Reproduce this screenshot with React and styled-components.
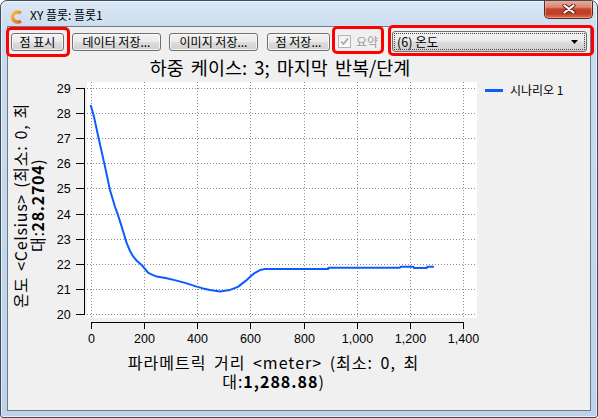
import React from 'react';
import styled, { createGlobalStyle } from 'styled-components';

const KR = `"Noto Sans CJK KR", "Noto Sans", sans-serif`;
const NUM = `"Liberation Sans", Arial, sans-serif`;

const GlobalStyle = createGlobalStyle`
  html, body { margin: 0; padding: 0; background: #ffffff; }
  body { font-family: ${KR}; }
  #root { width: 598px; height: 418px; }
`;

const Window = styled.div`
  position: relative;
  box-sizing: border-box;
  width: 598px;
  height: 418px;
  border: 1px solid #3f4c5c;
  border-radius: 7px 7px 3px 3px;
  background: linear-gradient(to bottom, #dae7f5 0px, #cadcef 30px, #bed3ea 100%);
  box-shadow: inset 0 0 0 1px rgba(255, 255, 255, 0.55);
  display: flex;
  flex-direction: column;
  padding-bottom: 6px;
  overflow: hidden;
`;

const TitleBar = styled.div`
  height: 25px;
  flex: none;
  display: flex;
  align-items: flex-start;
  padding-left: 9px;
`;

const AppIcon = styled.svg`
  margin-top: 9px;
  flex: none;
`;

const Caption = styled.span`
  margin-left: 7px;
  margin-top: 6px;
  font: 12px/16px ${KR};
  color: #000;
  white-space: nowrap;
`;

const CloseButton = styled.div`
  margin-left: auto;
  margin-right: 4px;
  margin-top: -1px;
  width: 49px;
  height: 19px;
  box-sizing: border-box;
  border: 1px solid #5e2418;
  border-top: none;
  border-radius: 0 0 5px 5px;
  background: linear-gradient(to bottom, #eab0a2 0%, #dc8570 40%, #c4452e 50%, #c13c24 75%, #d9714f 100%);
  box-shadow: inset 0 0 0 1px rgba(255, 210, 190, 0.45);
  display: flex;
  align-items: center;
  justify-content: center;
`;

const ContentFrame = styled.div`
  flex: 1;
  margin: 0 6px;
  border: 1px solid #6c7b8b;
  background: #f0f0f0;
  display: flex;
  flex-direction: column;
  min-height: 0;
`;

const Toolbar = styled.div`
  height: 29px;
  flex: none;
  display: flex;
  align-items: center;
  gap: 8px;
  padding: 0 3px;
`;

const Button = styled.button`
  box-sizing: border-box;
  width: ${p => p.$w}px;
  margin-left: ${p => p.$ml || 0}px;
  height: 18px;
  padding: 0;
  border: 1px solid #707070;
  border-radius: 3px;
  background: linear-gradient(to bottom, #f2f2f2 0%, #ebebeb 48%, #dddddd 52%, #cfcfcf 100%);
  box-shadow: inset 0 0 0 1px rgba(255, 255, 255, 0.7);
  font: 12px/16px ${KR};
  color: #000;
  white-space: nowrap;
  flex: none;
`;

const CheckLabel = styled.label`
  display: flex;
  align-items: center;
  gap: 5px;
  font: 12px/16px ${KR};
  color: #9c9c9c;
  flex: none;
`;

const CheckBox = styled.span`
  box-sizing: border-box;
  width: 13px;
  height: 13px;
  border: 1px solid #b4b4b4;
  background: linear-gradient(to bottom, #f0f0f0, #fbfbfb);
  display: flex;
  align-items: center;
  justify-content: center;
`;

const Combo = styled.div`
  box-sizing: border-box;
  flex: none;
  width: 195px;
  height: 21px;
  margin-left: auto;
  border: 1px solid #707070;
  border-radius: 3px;
  background: linear-gradient(to bottom, #f2f2f2 0%, #ebebeb 48%, #dddddd 52%, #cfcfcf 100%);
  padding: 1px;
  display: flex;
`;

const ComboFocus = styled.div`
  flex: 1;
  border: 1px dotted #444;
  display: flex;
  align-items: center;
  justify-content: space-between;
  padding: 0 6px 0 2px;
  font: 12.5px/16px ${KR};
  color: #000;
`;

const ChartArea = styled.div`
  flex: 1;
  display: grid;
  grid-template-columns: 44px 432px 1fr;
  grid-template-rows: 23px 271px auto;
`;

const ChartTitle = styled.div`
  grid-column: 2;
  grid-row: 1;
  text-align: center;
  padding-left: 24px;
  font: 18.5px/23px ${KR};
  word-spacing: 3px;
  color: #000;
  white-space: nowrap;
`;

const YTitleCell = styled.div`
  grid-column: 1;
  grid-row: 2;
  display: flex;
  align-items: center;
  justify-content: flex-start;
  padding-left: 4px;
  padding-bottom: 19px;
`;

const YTitleText = styled.div`
  writing-mode: vertical-rl;
  text-orientation: sideways;
  transform: rotate(180deg);
  text-align: center;
  white-space: nowrap;
  font: 16px/17px ${KR};
  letter-spacing: 0.7px;
  word-spacing: 2px;
  color: #000;
`;

const Plot = styled.svg`
  grid-column: 2;
  grid-row: 2;
  display: block;
`;

const Legend = styled.div`
  grid-column: 3;
  grid-row: 2;
  align-self: start;
  margin-top: 3px;
  padding-left: 1px;
  display: flex;
  align-items: center;
  gap: 7px;
`;

const LegendSwatch = styled.span`
  width: 18px;
  height: 3px;
  background: #0a5cff;
`;

const LegendText = styled.span`
  font: 12px/16px ${KR};
  color: #000;
  white-space: nowrap;
`;

const XTitle = styled.div`
  grid-column: 2;
  grid-row: 3;
  margin-top: 3px;
  text-align: center;
  padding-left: 11px;
  font: 16px/19px ${KR};
  letter-spacing: 1px;
  word-spacing: 3px;
  color: #000;
  white-space: nowrap;
`;

const Annotation = styled.div`
  position: absolute;
  box-sizing: border-box;
  left: ${p => p.$x - 1}px;
  top: ${p => p.$y - 1}px;
  width: ${p => p.$w}px;
  height: ${p => p.$h}px;
  border: 3px solid #ff0000;
  border-radius: 5px;
  pointer-events: none;
`;

const data = [
  [0, 28.32], [12.4, 27.85], [28.5, 27.06], [40.6, 26.49], [53.7, 25.87], [72.5, 24.94],
  [91.3, 24.27], [102.5, 23.94], [116.4, 23.48], [135.2, 22.82], [147.6, 22.51], [160, 22.28],
  [173.9, 22.11], [191.5, 21.95], [216.3, 21.64], [230.2, 21.57], [247.9, 21.49], [285.4, 21.42],
  [323, 21.33], [360.6, 21.22], [398.1, 21.09], [421.8, 21.02], [448.1, 20.96], [485.6, 20.9],
  [523.2, 20.96], [538.2, 21.02], [554.4, 21.09], [568.3, 21.21], [585.9, 21.35], [602.1, 21.51],
  [617.1, 21.64], [635.9, 21.75], [654.7, 21.79], [892.4, 21.79], [892.4, 21.84], [1161.7, 21.84],
  [1164.3, 21.88], [1211.6, 21.88], [1214.3, 21.83], [1262, 21.83], [1264.2, 21.88], [1288.88, 21.88],
];

const sx = m => 38.7 + m * 0.26625;
const sy = c => 9 + (29 - c) * 25.111;

const yTicks = [29, 28, 27, 26, 25, 24, 23, 22, 21, 20];
const xTicks = [0, 200, 400, 600, 800, 1000, 1200, 1400];

function Chart() {
  const pts = data.map(([m, c]) => `${sx(m).toFixed(1)},${sy(c).toFixed(1)}`).join(' ');
  return (
    <Plot width="432" height="271" viewBox="0 0 432 271">
      <rect x="35" y="3" width="390" height="236" fill="#ffffff" />
      {yTicks.map(v => {
        const y = Math.round(sy(v)) + 0.5;
        return (
          <line key={'hg' + v} x1="35" x2="425" y1={y} y2={y} stroke="#8a8a8a" strokeDasharray="1 2" shapeRendering="crispEdges" />
        );
      })}
      {xTicks.map(v => {
        const x = Math.round(sx(v)) + 0.5;
        return (
          <line key={'vg' + v} x1={x} x2={x} y1="3" y2="239" stroke="#8a8a8a" strokeDasharray="1 2" shapeRendering="crispEdges" />
        );
      })}
      <line x1="32.5" x2="32.5" y1={Math.round(sy(29))} y2={Math.round(sy(20)) + 1} stroke="#000" shapeRendering="crispEdges" />
      {yTicks.map(v => {
        const y = Math.round(sy(v)) + 0.5;
        return (
          <g key={'yt' + v}>
            <line x1="24" x2="32" y1={y} y2={y} stroke="#000" shapeRendering="crispEdges" />
            <text x="18.7" y={y} textAnchor="end" dominantBaseline="central" fontFamily={NUM} fontSize="12.5" fill="#000">{v}</text>
          </g>
        );
      })}
      <line x1={Math.round(sx(0))} x2={Math.round(sx(1400)) + 1} y1="243.5" y2="243.5" stroke="#000" shapeRendering="crispEdges" />
      {xTicks.map(v => {
        const x = Math.round(sx(v)) + 0.5;
        return (
          <g key={'xt' + v}>
            <line x1={x} x2={x} y1="243" y2="250" stroke="#000" shapeRendering="crispEdges" />
            <text x={x} y="260" textAnchor="middle" dominantBaseline="central" fontFamily={NUM} fontSize="12.5" fill="#000">{v.toLocaleString('en-US')}</text>
          </g>
        );
      })}
      <polyline points={pts} fill="none" stroke="#0a5cff" strokeWidth="2" strokeLinejoin="round" strokeLinecap="butt" />
    </Plot>
  );
}

export default function App() {
  return (
    <>
      <GlobalStyle />
      <Window>
        <TitleBar>
          <AppIcon width="13" height="14" viewBox="0 0 13 14">
            <defs>
              <linearGradient id="cg" x1="0" y1="0" x2="1" y2="1">
                <stop offset="0" stopColor="#f7c04e" />
                <stop offset="1" stopColor="#d86c10" />
              </linearGradient>
            </defs>
            <path d="M10.8 3.2 A5 5 0 1 0 10.8 10.8" fill="none" stroke="url(#cg)" strokeWidth="3.6" />
          </AppIcon>
          <Caption>XY 플롯: 플롯1</Caption>
          <CloseButton>
            <svg width="14" height="10" viewBox="0 0 14 10">
              <path d="M2.5 1.5 L11.5 8.5 M11.5 1.5 L2.5 8.5" stroke="#5a2016" strokeWidth="4" strokeLinecap="round" />
              <path d="M2.5 1.5 L11.5 8.5 M11.5 1.5 L2.5 8.5" stroke="#ffffff" strokeWidth="2.2" strokeLinecap="round" />
            </svg>
          </CloseButton>
        </TitleBar>
        <ContentFrame>
          <Toolbar>
            <Button $w={53}>점 표시</Button>
            <Button $w={89}>데이터 저장...</Button>
            <Button $w={89}>이미지 저장...</Button>
            <Button $w={63} $ml={1}>점 저장...</Button>
            <CheckLabel>
              <CheckBox>
                <svg width="9" height="9" viewBox="0 0 9 9">
                  <path d="M1 4.5 L3.5 7 L8 1.5" fill="none" stroke="#a5a5a5" strokeWidth="1.6" />
                </svg>
              </CheckBox>
              요약
            </CheckLabel>
            <Combo>
              <ComboFocus>
                <span>(6) 온도</span>
                <svg width="7" height="4" viewBox="0 0 7 4">
                  <path d="M0 0 L7 0 L3.5 4 Z" fill="#000" />
                </svg>
              </ComboFocus>
            </Combo>
          </Toolbar>
          <ChartArea>
            <ChartTitle>하중 케이스: 3; 마지막 반복/단계</ChartTitle>
            <YTitleCell>
              <YTitleText>
                온도 &lt;Celsius&gt; (최소: 0, 최<br />
                대:<b>28.2704</b>)
              </YTitleText>
            </YTitleCell>
            <Chart />
            <Legend>
              <LegendSwatch />
              <LegendText>시나리오 1</LegendText>
            </Legend>
            <XTitle>
              파라메트릭 거리 &lt;meter&gt; (최소: 0, 최<br />
              대:<b>1,288.88</b>)
            </XTitle>
          </ChartArea>
        </ContentFrame>
        <Annotation $x={6} $y={27} $w={64} $h={30} />
        <Annotation $x={332} $y={26} $w={52} $h={28} />
        <Annotation $x={388} $y={25} $w={206} $h={31} />
      </Window>
    </>
  );
}
